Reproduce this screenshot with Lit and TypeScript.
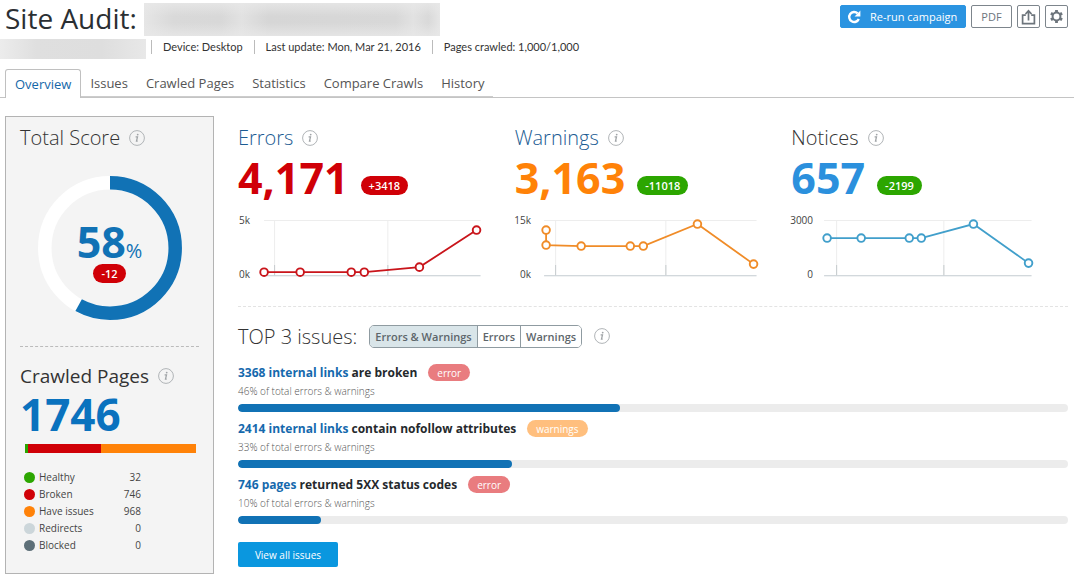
import { LitElement, html, svg, css } from "lit";
import { customElement, property, state } from "lit/decorators.js";

type Point = [number, number];

interface Stat {
  title: string;
  link: boolean;
  value: string;
  delta: string;
  tone: string;
  deltaTone: string;
  color: string;
  top: string;
  bottom: string;
  labelX: number;
  from: number;
  to: number;
  ticks: number[];
  points: Point[];
}

const STATS: Stat[] = [
  {
    title: "Errors", link: true, value: "4,171", delta: "+3418", tone: "red", deltaTone: "bad", color: "#c9151b",
    top: "5k", bottom: "0k", labelX: 12, from: 26, to: 242, ticks: [36, 149],
    points: [[26, 62], [62, 62], [113, 62], [126, 62], [181, 57], [238, 20]],
  },
  {
    title: "Warnings", link: true, value: "3,163", delta: "-11018", tone: "orange", deltaTone: "good", color: "#f08c28",
    top: "15k", bottom: "0k", labelX: 16, from: 29, to: 241, ticks: [40, 150],
    points: [[31, 20], [31, 35], [66, 36], [115, 36], [128, 36], [182, 14], [238, 54]],
  },
  {
    title: "Notices", link: false, value: "657", delta: "-2199", tone: "blue", deltaTone: "good", color: "#419fcb",
    top: "3000", bottom: "0", labelX: 22, from: 33, to: 240, ticks: [45, 152],
    points: [[36, 28], [70, 28], [118, 28], [130, 28], [182, 14], [237, 53]],
  },
];

const LEGEND = [
  { name: "Healthy", count: 32, tone: "healthy" },
  { name: "Broken", count: 746, tone: "broken" },
  { name: "Have issues", count: 968, tone: "issues" },
  { name: "Redirects", count: 0, tone: "redirects" },
  { name: "Blocked", count: 0, tone: "blocked" },
];

const ISSUES = [
  { link: "3368 internal links", text: "are broken", tag: "error", percent: 46 },
  { link: "2414 internal links", text: "contain nofollow attributes", tag: "warnings", percent: 33 },
  { link: "746 pages", text: "returned 5XX status codes", tag: "error", percent: 10 },
];

const TABS = ["Overview", "Issues", "Crawled Pages", "Statistics", "Compare Crawls", "History"];

@customElement("info-mark")
class InfoMark extends LitElement {
  static styles = css`
    :host { display: block; width: 16px; height: 16px; flex: none; }
    .icon { display: block; }
  `;
  render() {
    return html`<svg class="icon" width="16" height="16" viewBox="0 0 16 16" fill="none" stroke="#b0b4b7">
      <circle cx="8" cy="8" r="7.4" />
      <path d="M6.6 6.8h1.9l-1 4.4h1.2" stroke="#a0a4a7" stroke-width="1.3" />
      <circle cx="8.7" cy="4.6" r=".9" fill="#a0a4a7" stroke="none" />
    </svg>`;
  }
}

@customElement("trend-chart")
class TrendChart extends LitElement {
  @property({ attribute: false }) stat!: Stat;

  static styles = css`
    :host { display: block; }
    .chart { display: block; width: 100%; height: auto; overflow: visible; }
    .label { font: 10px "Open Sans", "Noto Sans", sans-serif; fill: #444; }
  `;
  render() {
    const s = this.stat;
    return html`<svg class="chart" viewBox="0 0 276 76" role="img" aria-label="${s.title} trend">
      <path d="M${s.from} 10.5H${s.to}" stroke="#ededed" />
      ${s.ticks.map((x) => svg`
        <path d="M${x + 0.5} 10V65" stroke="#ededed" />
        <path d="M${x + 0.5} 55V65" stroke="#c6cbce" />`)}
      <path d="M${s.from} 65.5H${s.to}" stroke="#c3cbd0" />
      <text class="label" x=${s.labelX} y="14" text-anchor="end">${s.top}</text>
      <text class="label" x=${s.labelX} y="68" text-anchor="end">${s.bottom}</text>
      <polyline points=${s.points.map((p) => p.join(",")).join(" ")} fill="none" stroke=${s.color} stroke-width="1.8" />
      ${s.points.map(([x, y]) => svg`<circle cx=${x} cy=${y} r="3.8" fill="#fff" stroke=${s.color} stroke-width="1.9" />`)}
    </svg>`;
  }
}

@customElement("app-root")
class AppRoot extends LitElement {
  @state() private filter = "Errors & Warnings";

  static styles = css`
    :host {
      display: block;
      min-height: 100vh;
      background: #fff;
      color: #333;
      font-family: "Open Sans", "Noto Sans", sans-serif;
      font-size: 12px;
    }
    * { box-sizing: border-box; }
    h1, h2, p { margin: 0; font-weight: 400; }
    a { text-decoration: none; color: inherit; }
    button { font-family: inherit; margin: 0; cursor: pointer; }

    .top { display: flex; justify-content: space-between; align-items: flex-start; padding: 3px 6px 0 5px; }
    .title { display: flex; align-items: flex-start; gap: 7px; height: 34px; font-size: 28px; line-height: 31px; color: #2b2f33; white-space: nowrap; }
    .mask-title { width: 296px; height: 33px; background:
      linear-gradient(180deg, #e8e8e8cc, #e8e8e800 40%, #e8e8e800 60%, #e8e8e8cc),
      linear-gradient(90deg, #e6e6e6, #d9d9d9 10%, #d8d8d8 26%, #e2e2e2 33%, #d6d6d6 42%, #d8d8d8 85%, #e2e2e2 91%, #d9d9d9 96%, #e6e6e6); }
    .mask-meta { width: 146px; height: 20px; background: linear-gradient(90deg, #ececec, #dfdfdf 25%, #dedede 70%, #e8e8e8); }

    .actions { display: flex; gap: 5px; padding-top: 2px; }
    .btn { display: flex; align-items: center; justify-content: center; height: 23px; padding: 0; border: 1px solid #7d858c; border-radius: 2px; background: #fff; color: #6d757c; font-size: 11px; }
    .btn-pdf { width: 41px; }
    .btn-icon { width: 23px; }
    .btn-run { width: 126px; justify-content: flex-start; padding-left: 6px; gap: 9px; border-color: #2b94e1; background: #2b94e1; color: #fff; }

    .meta { display: flex; align-items: flex-start; height: 20px; margin-top: 2px; font-family: Lato, sans-serif; font-size: 11px; white-space: nowrap; }
    .meta-item { border-left: 1px solid #bbb; margin-top: 1px; line-height: 14px; padding: 0 11px; }
    .meta .mask-meta { margin-right: 5px; }

    .tabs { display: flex; height: 29px; margin-top: 10px; padding-left: 5px; border-bottom: 1px solid #c4c4c4; white-space: nowrap; }
    .tab { height: 28px; padding: 0 9px; line-height: 28px; font-size: 13px; color: #555; border-bottom: 1px solid #ccc; }
    .tab-active { height: 29px; padding: 0 9px; border: 1px solid #c0c0c0; border-bottom: 0; border-radius: 3px 3px 0 0; background: #fff; color: #1567a8; }

    .body { display: grid; grid-template-columns: 209px minmax(0, 1fr); gap: 24px; align-items: start; padding: 18px 6px 6px 5px; }
    .side { border: 1px solid #b3b3b3; background: #f4f4f4; padding: 0 14px 19px; }
    .head { display: flex; align-items: center; gap: 9px; height: 28px; font-size: 20px; line-height: 24px; font-weight: 300; white-space: nowrap; }
    .head-link { color: #1c5c93; }
    .side .head { margin-top: 7px; }
    .side .head-pages { font-size: 19px; font-weight: 400; margin-top: 15px; }

    .gauge { display: grid; justify-items: center; margin-top: 24px; }
    .ring, .score { grid-area: 1 / 1; }
    .ring { width: 144px; height: 144px; }
    .score { display: flex; flex-direction: column; align-items: center; padding-top: 44px; }
    .score-value { display: flex; align-items: baseline; line-height: 44px; color: #1172b5; }
    .score-number { font-size: 43px; font-weight: 700; }
    .score-unit { font-size: 20px; line-height: 20px; }
    .rule { border-top: 1px dashed #bbb; margin-top: 26px; }

    .pill { display: inline-flex; align-items: center; justify-content: center; height: 19px; border-radius: 10px; padding: 0 8px; color: #fff; font-size: 11px; font-weight: 600; }
    .bad { background: #d00007; }
    .good { background: #2ca600; }

    .big { font-size: 43px; line-height: 48px; font-weight: 700; }
    .red { color: #d00007; }
    .orange { color: #ff8208; }
    .blue { color: #2b90dd; }
    .pages { font-size: 44px; color: #0a72be; }

    .split { display: flex; height: 9px; margin: 6px 3px 0 5px; }
    .healthy { background: #2ca600; }
    .broken { background: #d00007; }
    .issues { background: #ff8208; }
    .redirects { background: #ccd6da; }
    .blocked { background: #5d6f78; }

    .legend { border-collapse: collapse; width: 117px; margin: 16px 0 0 4px; font-size: 10px; color: #444; }
    .legend th, .legend td { height: 17px; padding: 0; font-weight: 400; line-height: 17px; white-space: nowrap; }
    .legend-name { display: flex; align-items: center; gap: 4px; }
    .legend td { text-align: right; }
    .dot { width: 11px; height: 11px; border-radius: 50%; flex: none; }

    .stats { display: grid; grid-template-columns: repeat(3, minmax(0, 1fr)); padding-top: 8px; }
    .stat-row { display: flex; align-items: center; gap: 12px; height: 48px; margin-top: 2px; }
    .stat-row .pill { margin-top: 14px; }
    .stat trend-chart { margin-top: 8px; }
    .divider { border-top: 1px dashed #e3e3e3; margin-top: 20px; }

    .filters { display: flex; align-items: center; gap: 12px; margin-top: 15px; height: 28px; }
    .filter-title { font-size: 20px; font-weight: 300; white-space: nowrap; }
    .group { display: flex; height: 23px; border: 1px solid #8f9ba1; border-radius: 5px; overflow: hidden; }
    .choice { border: 0; background: #fff; color: #5d666b; padding: 0 5px; font-size: 11px; font-weight: 600; white-space: nowrap; }
    .choice + .choice { border-left: 1px solid #8f9ba1; }
    .choice-on { background: #d9e5e9; }

    .list { list-style: none; margin: 13px 0 0; padding: 0; }
    .issue { height: 56px; }
    .issue-title { display: flex; align-items: center; gap: 11px; height: 19px; font-size: 12px; font-weight: 700; color: #25292c; white-space: nowrap; }
    .issue-link { color: #1569ad; }
    .tag { height: 17px; border-radius: 9px; padding: 0 9px; display: flex; align-items: center; color: #fff; font-size: 10px; font-weight: 400; }
    .tag-error { background: #e97c7f; }
    .tag-warnings { background: #ffbf7e; }
    .share { font-size: 10px; line-height: 18px; font-weight: 300; color: #555; }
    .track { height: 8px; margin-top: 4px; border-radius: 4px; background: #ececec; overflow: hidden; }
    .fill { height: 8px; border-radius: 4px; background: #1172b5; }
    .view { display: block; margin-top: 11px; height: 25px; width: 100px; padding: 0; border: 0; border-radius: 2px; background: #0a97df; color: #fff; font-size: 10px; }
  `;

  render() {
    const total = LEGEND.reduce((sum, l) => sum + l.count, 0);
    return html`
      <header>
        <div class="top">
          <h1 class="title">Site Audit: <span class="mask-title"></span></h1>
          <div class="actions">
            <button class="btn btn-run">
              <svg width="14" height="14" viewBox="0 0 14 14" fill="none" stroke="#fff" stroke-width="2.4">
                <path d="M10.6 3.3A5 5 0 1 0 11.8 9" />
                <path d="M13.4 .6v5.8H7.6z" fill="#fff" stroke="none" />
              </svg>
              Re-run campaign
            </button>
            <button class="btn btn-pdf">PDF</button>
            <button class="btn btn-icon" aria-label="Export">
              <svg width="15" height="16" viewBox="0 0 15 16" fill="none" stroke="#6d757c" stroke-width="1.7">
                <path d="M4.8 6.2H1.6v8.4h11.8V6.2h-3.2M7.5 11.6V2.4M4.5 5l3-3.2 3 3.2" />
              </svg>
            </button>
            <button class="btn btn-icon" aria-label="Settings">
              <svg width="15" height="15" viewBox="0 0 15 15" fill="none" stroke="#6d757c">
                <circle cx="7.5" cy="7.5" r="3.9" stroke-width="2" />
                <path stroke-width="2.8" d="M7.500 1v2.600M7.500 11.400V14M1.900 4.250l2.200 1.300M10.900 9.450l2.200 1.300M1.900 10.750l2.200-1.300M10.900 5.550l2.200-1.300" />
              </svg>
            </button>
          </div>
        </div>
        <div class="meta">
          <span class="mask-meta"></span>
          <span class="meta-item">Device: Desktop</span>
          <span class="meta-item">Last update: Mon, Mar 21, 2016</span>
          <span class="meta-item">Pages crawled: 1,000/1,000</span>
        </div>
        <nav class="tabs">
          ${TABS.map((t, i) => html`<a href="#" class="tab ${i === 0 ? "tab-active" : ""}">${t}</a>`)}
        </nav>
      </header>
      <div class="body">
        <aside class="side">
          <h2 class="head">Total Score <info-mark></info-mark></h2>
          <div class="gauge">
            <svg class="ring" viewBox="0 0 144 144" fill="none" stroke-width="13.5">
              <circle cx="72" cy="72" r="65.2" stroke="#fff" />
              <circle cx="72" cy="72" r="65.2" stroke="#1172b5" pathLength="100" stroke-dasharray="58 100" transform="rotate(-90 72 72)" />
            </svg>
            <div class="score">
              <div class="score-value"><span class="score-number">58</span><span class="score-unit">%</span></div>
              <span class="pill bad">-12</span>
            </div>
          </div>
          <div class="rule"></div>
          <h2 class="head head-pages">Crawled Pages <info-mark></info-mark></h2>
          <div class="big pages">1746</div>
          <div class="split">
            ${LEGEND.map((l) => html`<div class=${l.tone} style="width:${(l.count / total) * 100}%"></div>`)}
          </div>
          <table class="legend">
            ${LEGEND.map((l) => html`<tr>
              <th scope="row"><span class="legend-name"><span class="dot ${l.tone}"></span>${l.name}</span></th>
              <td>${l.count}</td>
            </tr>`)}
          </table>
        </aside>
        <main>
          <section class="stats">
            ${STATS.map((s) => html`<div class="stat">
              <h2 class="head">${s.link ? html`<a class="head-link" href="#">${s.title}</a>` : s.title}<info-mark></info-mark></h2>
              <div class="stat-row"><span class="big ${s.tone}">${s.value}</span><span class="pill ${s.deltaTone}">${s.delta}</span></div>
              <trend-chart .stat=${s}></trend-chart>
            </div>`)}
          </section>
          <div class="divider"></div>
          <div class="filters">
            <h2 class="filter-title">TOP 3 issues:</h2>
            <div class="group">
              ${["Errors & Warnings", "Errors", "Warnings"].map((f) => html`<button
                class="choice ${f === this.filter ? "choice-on" : ""}"
                aria-pressed=${f === this.filter}
                @click=${() => (this.filter = f)}>${f}</button>`)}
            </div>
            <info-mark></info-mark>
          </div>
          <ul class="list">
            ${ISSUES.map((i) => html`<li class="issue">
              <div class="issue-title">
                <span><a class="issue-link" href="#">${i.link}</a> ${i.text}</span>
                <span class="tag tag-${i.tag}">${i.tag}</span>
              </div>
              <p class="share">${i.percent}% of total errors &amp; warnings</p>
              <div class="track"><div class="fill" style="width:${i.percent}%"></div></div>
            </li>`)}
          </ul>
          <button class="view">View all issues</button>
        </main>
      </div>
    `;
  }
}
